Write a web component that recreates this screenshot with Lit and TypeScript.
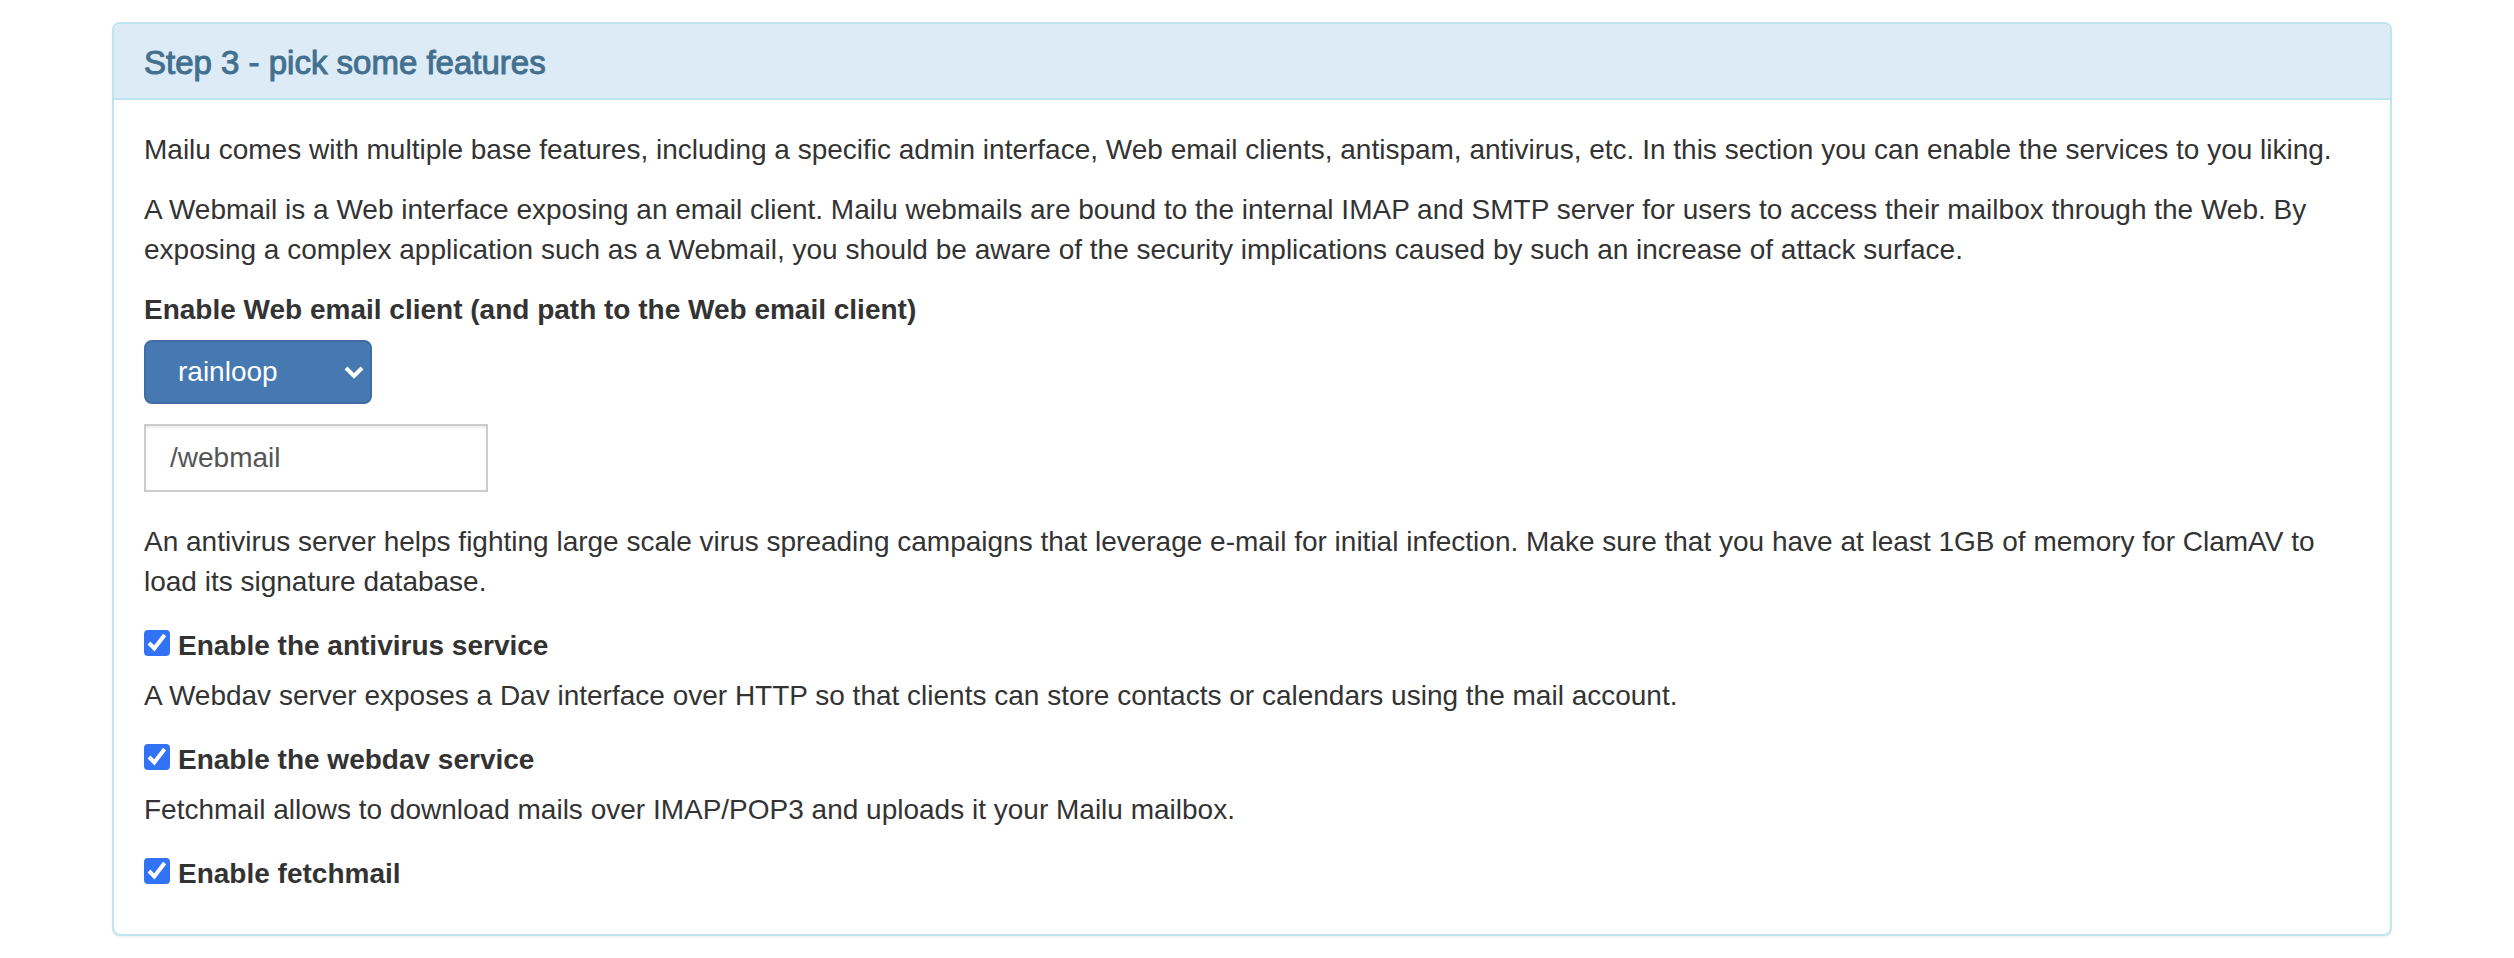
import { LitElement, html, css } from "lit";
import { customElement, state } from "lit/decorators.js";

interface Service {
  id: string;
  intro: string;
  label: string;
  enabled: boolean;
}

@customElement("app-root")
export class AppRoot extends LitElement {
  static styles = css`
    :host {
      display: block;
      box-sizing: border-box;
      padding: 22px 122px 22px 112px;
      background: #fff;
      color: #333;
      font-family: "Helvetica Neue", "Liberation Sans", Helvetica, Arial, sans-serif;
      font-size: 28px;
      line-height: 40px;
    }
    * {
      box-sizing: border-box;
    }
    .panel {
      border: 2px solid #bfe6ef;
      border-radius: 8px;
      background: #fff;
      box-shadow: 0 2px 2px rgba(0, 0, 0, 0.05);
    }
    .heading {
      padding: 22px 30px 18px;
      border-bottom: 2px solid #bfe6ef;
      border-radius: 6px 6px 0 0;
      background: #dcebf6;
    }
    .title {
      margin: 0;
      color: #43708f;
      font-size: 33px;
      font-weight: 500;
      line-height: 34px;
      -webkit-text-stroke: 1px currentColor;
    }
    .body {
      padding: 30px;
    }
    .text {
      margin: 0 0 20px;
    }
    .label {
      display: block;
      width: fit-content;
      margin-bottom: 10px;
      font-weight: 700;
    }
    .picker {
      display: grid;
      width: 228px;
      margin-bottom: 20px;
    }
    .select,
    .chevron {
      grid-area: 1 / 1;
    }
    .select {
      appearance: none;
      height: 64px;
      padding: 0 32px;
      border: 2px solid #3f6da3;
      border-radius: 8px;
      background: #4678b2;
      color: #fff;
      font: inherit;
    }
    .chevron {
      place-self: center end;
      width: 20px;
      height: 14px;
      margin-right: 8px;
      pointer-events: none;
      fill: none;
      stroke: #fff;
      stroke-width: 4;
    }
    .path {
      display: block;
      width: 344px;
      height: 68px;
      margin-bottom: 30px;
      padding: 12px 24px;
      border: 2px solid #ccc;
      border-radius: 0;
      background: #fff;
      box-shadow: inset 0 2px 2px rgba(0, 0, 0, 0.075);
      color: #555;
      font: inherit;
    }
    .service .text {
      margin-bottom: 24px;
    }
    .check {
      display: flex;
      align-items: flex-start;
      gap: 8px;
      width: fit-content;
      margin-bottom: 10px;
      font-weight: 700;
    }
    .tick {
      display: grid;
      margin-top: 4px;
    }
    .box,
    .mark {
      grid-area: 1 / 1;
      width: 26px;
      height: 26px;
      margin: 0;
    }
    .box {
      appearance: none;
      border: 2px solid #767676;
      border-radius: 4px;
      background: #fff;
    }
    .box:checked {
      border-color: #3273f6;
      background: #3273f6;
    }
    .mark {
      visibility: hidden;
      pointer-events: none;
      fill: none;
      stroke: #fff;
      stroke-width: 4;
    }
    .box:checked + .mark {
      visibility: visible;
    }
  `;

  @state() private services: Service[] = [
    {
      id: "antivirus",
      intro:
        "An antivirus server helps fighting large scale virus spreading campaigns that leverage e-mail for initial infection. Make sure that you have at least 1GB of memory for ClamAV to load its signature database.",
      label: "Enable the antivirus service",
      enabled: true,
    },
    {
      id: "webdav",
      intro:
        "A Webdav server exposes a Dav interface over HTTP so that clients can store contacts or calendars using the mail account.",
      label: "Enable the webdav service",
      enabled: true,
    },
    {
      id: "fetchmail",
      intro: "Fetchmail allows to download mails over IMAP/POP3 and uploads it your Mailu mailbox.",
      label: "Enable fetchmail",
      enabled: true,
    },
  ];

  private toggle(id: string) {
    this.services = this.services.map((s) => (s.id === id ? { ...s, enabled: !s.enabled } : s));
  }

  private renderService(s: Service) {
    return html`
      <div class="service">
        <p class="text">${s.intro}</p>
        <label class="check" for=${s.id}>
          <span class="tick">
            <input class="box" type="checkbox" id=${s.id} .checked=${s.enabled} @change=${() => this.toggle(s.id)} />
            <svg class="mark" viewBox="0 0 26 26" aria-hidden="true"><path d="M5 13 10.3 18.4 20.6 5" /></svg>
          </span>
          <span>${s.label}</span>
        </label>
      </div>
    `;
  }

  render() {
    return html`
      <section class="panel">
        <header class="heading"><h3 class="title">Step 3 - pick some features</h3></header>
        <div class="body">
          <p class="text">
            Mailu comes with multiple base features, including a specific admin interface, Web email clients, antispam,
            antivirus, etc. In this section you can enable the services to you liking.
          </p>
          <p class="text">
            A Webmail is a Web interface exposing an email client. Mailu webmails are bound to the internal IMAP and
            SMTP server for users to access their mailbox through the Web. By exposing a complex application such as a
            Webmail, you should be aware of the security implications caused by such an increase of attack surface.
          </p>
          <label class="label" for="webmail">Enable Web email client (and path to the Web email client)</label>
          <div class="picker">
            <select class="select" id="webmail">
              <option>none</option>
              <option>roundcube</option>
              <option selected>rainloop</option>
            </select>
            <svg class="chevron" viewBox="0 0 20 14" aria-hidden="true"><path d="M2 3 10 11 18 3" /></svg>
          </div>
          <input class="path" type="text" value="/webmail" aria-label="Path to the Web email client" />
          ${this.services.map((s) => this.renderService(s))}
        </div>
      </section>
    `;
  }
}
